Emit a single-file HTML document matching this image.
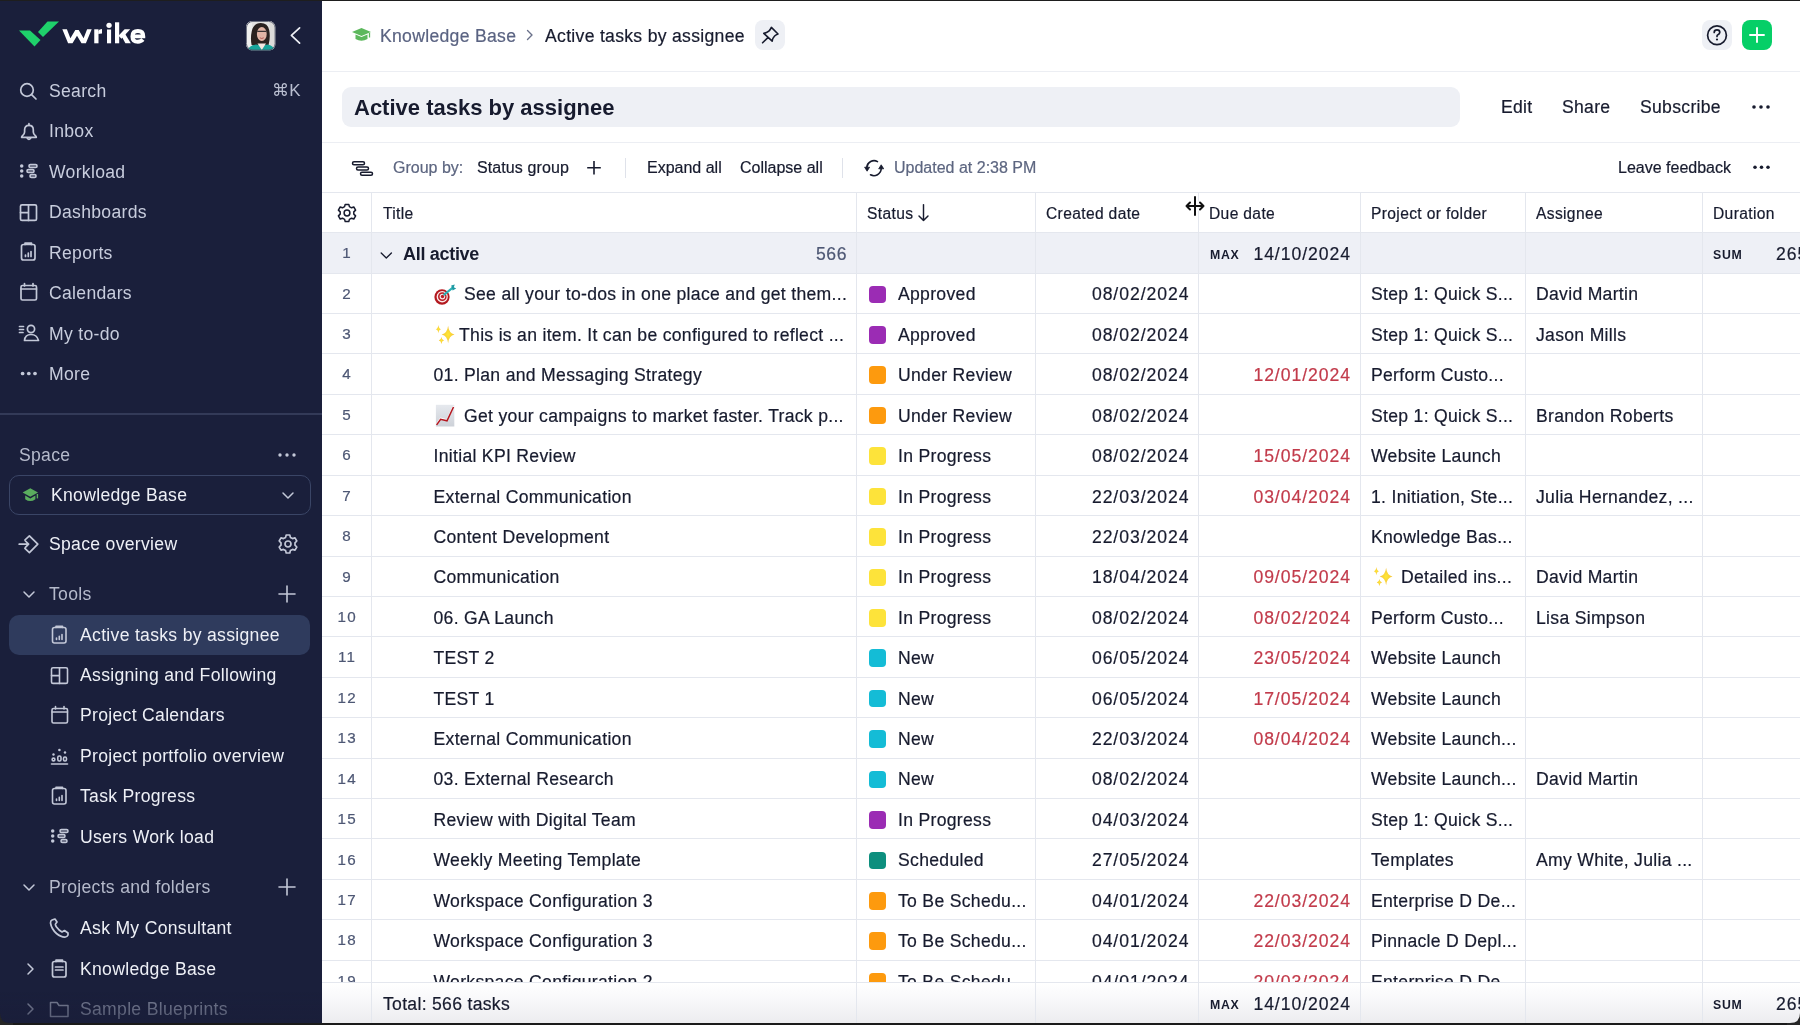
<!DOCTYPE html>
<html><head><meta charset="utf-8"><title>Active tasks by assignee</title>
<style>
html,body{margin:0;padding:0;width:1800px;height:1025px;overflow:hidden;background:#fff}
body{position:relative;font-family:"Liberation Sans", sans-serif}
.t{position:absolute;white-space:nowrap;line-height:40px;height:40px;-webkit-text-stroke:0.2px currentColor}
#root{position:absolute;left:0;top:0;width:1800px;height:1025px;will-change:transform}
svg{overflow:visible}
</style></head><body><div id="root">
<div style="position:absolute;left:0px;top:0px;width:322px;height:1025px;background:#1a1f3b;"></div>
<svg style="position:absolute;left:0px;top:0px;" width="160" height="60" viewBox="0 0 160 60">
<polygon points="19,30.5 30,30.5 40.5,40 34.5,46.5" fill="#1fd16b"/>
<polygon points="38,32 47.5,21.5 59,21.5 43,37" fill="#1fd16b"/>
<g fill="#ffffff">
<polygon points="62.3,29.3 66.9,29.3 70.4,38.2 75.3,30 78.7,30 83.6,38.2 87.1,29.3 91.7,29.3 85.9,43.3 81.5,43.3 77,35.8 72.5,43.3 68.1,43.3"/>
<rect x="94.25" y="29.3" width="4.25" height="14"/>
<path d="M98.3,34 Q99.3,33.4 102,33.4 L102,29.1 Q99.2,29.1 98.3,31 Z"/>
<rect x="107" y="29.5" width="4.1" height="13.8"/>
<circle cx="109.05" cy="25.3" r="2.65"/>
<rect x="115" y="22.3" width="4.2" height="21"/>
<polygon points="118.5,35.8 124.6,29.3 130.2,29.3 121.5,38.8"/>
<polygon points="121.2,35.4 124.4,32.8 130.8,43.3 125.4,43.3"/>
</g>
<path d="M132.4,36.4 L143.3,36.4 Q143.3,31 137.9,31 Q132.4,31 132.4,36.4 Q132.4,41.7 137.9,41.7 Q141.2,41.7 142.9,39.6" fill="none" stroke="#ffffff" stroke-width="3.9"/>
</svg>
<svg style="position:absolute;left:245.5px;top:20.5px;" width="29.5" height="29.5" viewBox="0 0 29.5 29.5">
<defs><clipPath id="av"><rect x="0" y="0" width="29.5" height="29.5" rx="6.5"/></clipPath></defs>
<g clip-path="url(#av)">
<rect width="29.5" height="29.5" fill="#e4e3e2"/>
<rect x="0" y="0" width="6" height="29.5" fill="#efefee"/>
<rect x="23.5" y="0" width="6" height="29.5" fill="#dcdbd9"/>
<path d="M5.6,24 Q4.2,17 5.8,10 Q7.5,2.2 14.8,2 Q21.8,2.2 23.2,9 Q24.6,16 22.6,24 Q19,25 14.5,24.5 Q9,25 5.6,24 Z" fill="#2a2220"/>
<ellipse cx="15.8" cy="13" rx="4.9" ry="7" fill="#e2b5a6"/>
<path d="M11.2,10.3 L20.4,10.3" stroke="#3b3434" stroke-width="1.2"/>
<path d="M13.8,16.8 Q15.8,18.2 17.8,16.8" stroke="#b0524f" stroke-width="0.9" fill="none"/>
<path d="M1.5,29.5 Q3,24.2 10,23.4 L15.8,24.8 L21.5,23.4 Q27.5,24.2 28.5,29.5 Z" fill="#17a59b"/>
<path d="M11.5,22.5 L15.8,29 L20,22.5 Z" fill="#f4e6e0"/>
</g>
<rect x="0.4" y="0.4" width="28.7" height="28.7" rx="6.5" fill="none" stroke="#4f5468" stroke-width="0.9"/>
</svg>
<svg style="position:absolute;left:285px;top:24px;" width="20" height="22" viewBox="0 0 20 22"><path d="M14.6,3.8 L6.4,11.4 L14.6,19.2" fill="none" stroke="#eef0f6" stroke-width="1.7" stroke-linecap="round" stroke-linejoin="round"/></svg>
<div class="t " style="left:49px;top:70.90px;font-size:17.6px;color:#c8cddd;font-weight:400;letter-spacing:0.3px;-webkit-text-stroke:0;">Search</div>
<div class="t " style="left:49px;top:111.30px;font-size:17.6px;color:#c8cddd;font-weight:400;letter-spacing:0.3px;-webkit-text-stroke:0;">Inbox</div>
<div class="t " style="left:49px;top:151.70px;font-size:17.6px;color:#c8cddd;font-weight:400;letter-spacing:0.3px;-webkit-text-stroke:0;">Workload</div>
<div class="t " style="left:49px;top:192.20px;font-size:17.6px;color:#c8cddd;font-weight:400;letter-spacing:0.3px;-webkit-text-stroke:0;">Dashboards</div>
<div class="t " style="left:49px;top:232.60px;font-size:17.6px;color:#c8cddd;font-weight:400;letter-spacing:0.3px;-webkit-text-stroke:0;">Reports</div>
<div class="t " style="left:49px;top:273.00px;font-size:17.6px;color:#c8cddd;font-weight:400;letter-spacing:0.3px;-webkit-text-stroke:0;">Calendars</div>
<div class="t " style="left:49px;top:313.50px;font-size:17.6px;color:#c8cddd;font-weight:400;letter-spacing:0.3px;-webkit-text-stroke:0;">My to-do</div>
<div class="t " style="left:49px;top:353.90px;font-size:17.6px;color:#c8cddd;font-weight:400;letter-spacing:0.3px;-webkit-text-stroke:0;">More</div>
<div class="t " style="left:272px;top:71.00px;font-size:17px;color:#b9bed0;font-weight:400;letter-spacing:0.3px;-webkit-text-stroke:0;">&#8984;K</div>
<svg style="position:absolute;left:16px;top:80px;" width="24" height="24" viewBox="0 0 24 24"><circle cx="11" cy="10" r="6.3" fill="none" stroke="#c3c8d8" stroke-width="1.7" stroke-linecap="round" stroke-linejoin="round"/><path d="M15.6,14.6 L20,19" fill="none" stroke="#c3c8d8" stroke-width="1.7" stroke-linecap="round" stroke-linejoin="round"/></svg>
<svg style="position:absolute;left:16px;top:120.8px;" width="26" height="24" viewBox="0 0 26 24"><path d="M5.6,16.3 Q5.6,15.4 6.6,14.6 Q8.6,13 8.6,11 L8.6,9 Q8.6,4.4 12.95,4.4 Q17.3,4.4 17.3,9 L17.3,11 Q17.3,13 19.3,14.6 Q20.3,15.4 20.3,16.3 Z" fill="none" stroke="#c3c8d8" stroke-width="1.7" stroke-linecap="round" stroke-linejoin="round" stroke-width="1.55"/><path d="M11.2,17 Q12.95,19.8 14.7,17 M12.95,2.7 L12.95,4.3" fill="none" stroke="#c3c8d8" stroke-width="1.7" stroke-linecap="round" stroke-linejoin="round" stroke-width="1.55"/></svg>
<svg style="position:absolute;left:16px;top:160px;" width="24" height="24" viewBox="0 0 24 24"><circle cx="5.7" cy="6" r="1.75" fill="#c3c8d8"/><circle cx="5.7" cy="11" r="1.75" fill="#c3c8d8"/><circle cx="5.7" cy="16" r="1.75" fill="#c3c8d8"/><rect x="13" y="4.6" width="8" height="2.8" rx="1.4" fill="none" stroke="#c3c8d8" stroke-width="1.7" stroke-linecap="round" stroke-linejoin="round" stroke-width="1.4"/><rect x="11" y="9.6" width="7" height="2.8" rx="1.4" fill="none" stroke="#c3c8d8" stroke-width="1.7" stroke-linecap="round" stroke-linejoin="round" stroke-width="1.4"/><rect x="14" y="14.6" width="6" height="2.8" rx="1.4" fill="none" stroke="#c3c8d8" stroke-width="1.7" stroke-linecap="round" stroke-linejoin="round" stroke-width="1.4"/></svg>
<svg style="position:absolute;left:16px;top:200px;" width="24" height="24" viewBox="0 0 24 24"><rect x="4.5" y="4.8" width="16" height="15.6" rx="1.5" fill="none" stroke="#c3c8d8" stroke-width="1.7" stroke-linecap="round" stroke-linejoin="round"/><path d="M12.5,4.8 L12.5,20.4 M4.5,12.6 L12.5,12.6" fill="none" stroke="#c3c8d8" stroke-width="1.7" stroke-linecap="round" stroke-linejoin="round"/></svg>
<svg style="position:absolute;left:16px;top:240px;" width="24" height="24" viewBox="0 0 24 24"><rect x="5.5" y="4.5" width="13.5" height="15.5" rx="2" fill="none" stroke="#c3c8d8" stroke-width="1.7" stroke-linecap="round" stroke-linejoin="round"/><path d="M9,4.5 L9,3.2 L15.5,3.2 L15.5,4.5" fill="none" stroke="#c3c8d8" stroke-width="1.7" stroke-linecap="round" stroke-linejoin="round"/><path d="M9.5,16.5 L9.5,15 M12.3,16.5 L12.3,13.2 M15,16.5 L15,11.5" fill="none" stroke="#c3c8d8" stroke-width="1.7" stroke-linecap="round" stroke-linejoin="round"/></svg>
<svg style="position:absolute;left:16px;top:280px;" width="24" height="24" viewBox="0 0 24 24"><rect x="5" y="5.5" width="15.5" height="14.5" rx="1.5" fill="none" stroke="#c3c8d8" stroke-width="1.7" stroke-linecap="round" stroke-linejoin="round"/><path d="M5,9 L20.5,9 M8.5,3.5 L8.5,6 M17,3.5 L17,6" fill="none" stroke="#c3c8d8" stroke-width="1.7" stroke-linecap="round" stroke-linejoin="round"/></svg>
<svg style="position:absolute;left:16px;top:321px;" width="26" height="24" viewBox="0 0 26 24"><circle cx="15" cy="8" r="3.6" fill="none" stroke="#c3c8d8" stroke-width="1.7" stroke-linecap="round" stroke-linejoin="round"/><path d="M8.5,19.5 Q9,13.5 15,13.5 Q21,13.5 22.5,19.5 Z" fill="none" stroke="#c3c8d8" stroke-width="1.7" stroke-linecap="round" stroke-linejoin="round"/><path d="M3.5,5.5 L7.5,5.5 M3.5,8.5 L7.5,8.5 M3.5,11.5 L7,11.5" fill="none" stroke="#c3c8d8" stroke-width="1.7" stroke-linecap="round" stroke-linejoin="round" stroke-width="1.3"/></svg>
<svg style="position:absolute;left:16px;top:361.5px;" width="24" height="24" viewBox="0 0 24 24"><circle cx="6.6" cy="11.5" r="1.85" fill="#c3c8d8"/><circle cx="12.8" cy="11.5" r="1.85" fill="#c3c8d8"/><circle cx="19" cy="11.5" r="1.85" fill="#c3c8d8"/></svg>
<div style="position:absolute;left:0px;top:413px;width:322px;height:1.5px;background:#333a58;"></div>
<div class="t " style="left:19px;top:435.00px;font-size:17.6px;color:#b5bacb;font-weight:400;letter-spacing:0.3px;-webkit-text-stroke:0;">Space</div>
<svg style="position:absolute;left:274px;top:444px;" width="26" height="22" viewBox="0 0 26 22"><circle cx="6" cy="11" r="1.7" fill="#c3c8d8"/><circle cx="13" cy="11" r="1.7" fill="#c3c8d8"/><circle cx="20" cy="11" r="1.7" fill="#c3c8d8"/></svg>
<div style="position:absolute;left:9px;top:475px;width:299.5px;height:37.5px;border:1.3px solid #3a4566;border-radius:10px;"></div>
<svg style="position:absolute;left:21px;top:485px;" width="20" height="20" viewBox="0 0 20 20"><path d="M1.6,7.6 L9.3,3.2 L17,7.6 L9.3,11.8 Z" fill="#5aad5e"/><path d="M4.2,10.6 L4.2,14.2 Q9.3,18 14.4,14.2 L14.4,10.6 L9.3,13.4 Z" fill="#5aad5e"/><path d="M16.4,9 L16.4,13.4" stroke="#5aad5e" stroke-width="1.4"/></svg>
<div class="t " style="left:51px;top:475.00px;font-size:17.6px;color:#eef0f6;font-weight:400;letter-spacing:0.3px;-webkit-text-stroke:0;">Knowledge Base</div>
<svg style="position:absolute;left:278px;top:485px;" width="20" height="20" viewBox="0 0 20 20"><path d="M5,8 L10,13 L15,8" fill="none" stroke="#c3c8d8" stroke-width="1.5" stroke-linecap="round" stroke-linejoin="round"/></svg>
<svg style="position:absolute;left:17px;top:532px;" width="24" height="24" viewBox="0 0 24 24"><path d="M2.2,12.2 L11.5,12.2 M8.4,9 L11.6,12.2 L8.4,15.4" fill="none" stroke="#c3c8d8" stroke-width="1.7" stroke-linecap="round" stroke-linejoin="round" stroke-width="1.5"/><path d="M7.9,8 L12.4,3.8 L20.8,12.1 L12.4,20.6 L7.9,16.3" fill="none" stroke="#c3c8d8" stroke-width="1.7" stroke-linecap="round" stroke-linejoin="round" stroke-width="1.5"/></svg>
<div class="t " style="left:49px;top:524.00px;font-size:17.6px;color:#eef0f6;font-weight:400;letter-spacing:0.3px;-webkit-text-stroke:0;">Space overview</div>
<svg style="position:absolute;left:276px;top:532px;" width="24" height="24" viewBox="0 0 24 24"><g transform="translate(12,12)"><path d="M-1.8,-9 L1.8,-9 L2.4,-6.6 L4.6,-5.4 L7,-6.2 L8.8,-3 L7,-1.2 L7,1.2 L8.8,3 L7,6.2 L4.6,5.4 L2.4,6.6 L1.8,9 L-1.8,9 L-2.4,6.6 L-4.6,5.4 L-7,6.2 L-8.8,3 L-7,1.2 L-7,-1.2 L-8.8,-3 L-7,-6.2 L-4.6,-5.4 L-2.4,-6.6 Z" fill="none" stroke="#c3c8d8" stroke-width="1.7" stroke-linecap="round" stroke-linejoin="round" stroke-width="1.5"/><circle r="3" fill="none" stroke="#c3c8d8" stroke-width="1.7" stroke-linecap="round" stroke-linejoin="round" stroke-width="1.5"/></g></svg>
<svg style="position:absolute;left:19px;top:584px;" width="20" height="20" viewBox="0 0 20 20"><path d="M5,8 L10,13 L15,8" fill="none" stroke="#c3c8d8" stroke-width="1.5" stroke-linecap="round" stroke-linejoin="round"/></svg>
<div class="t " style="left:49px;top:574.00px;font-size:17.6px;color:#b5bacb;font-weight:400;letter-spacing:0.3px;-webkit-text-stroke:0;">Tools</div>
<svg style="position:absolute;left:276px;top:583px;" width="22" height="22" viewBox="0 0 22 22"><path d="M11,3 L11,19 M3,11 L19,11" fill="none" stroke="#c3c8d8" stroke-width="1.6" stroke-linecap="round"/></svg>
<div style="position:absolute;left:9px;top:614.5px;width:301px;height:40.5px;background:#2f3b5d;border-radius:10px"></div>
<svg style="position:absolute;left:47px;top:623px;" width="24" height="24" viewBox="0 0 24 24"><rect x="5.5" y="4.5" width="13.5" height="15.5" rx="2" fill="none" stroke="#c3c8d8" stroke-width="1.6" stroke-linecap="round" stroke-linejoin="round"/><path d="M9,4.5 L9,3.2 L15.5,3.2 L15.5,4.5" fill="none" stroke="#c3c8d8" stroke-width="1.6" stroke-linecap="round" stroke-linejoin="round"/><path d="M9.5,16.5 L9.5,15 M12.3,16.5 L12.3,13.2 M15,16.5 L15,11.5" fill="none" stroke="#c3c8d8" stroke-width="1.6" stroke-linecap="round" stroke-linejoin="round"/></svg>
<div class="t " style="left:80px;top:615.00px;font-size:17.6px;color:#eef0f6;font-weight:400;letter-spacing:0.3px;-webkit-text-stroke:0;">Active tasks by assignee</div>
<svg style="position:absolute;left:47px;top:663px;" width="24" height="24" viewBox="0 0 24 24"><rect x="4.5" y="4.8" width="16" height="15.6" rx="1.5" fill="none" stroke="#c3c8d8" stroke-width="1.6" stroke-linecap="round" stroke-linejoin="round"/><path d="M12.5,4.8 L12.5,20.4 M4.5,12.6 L12.5,12.6" fill="none" stroke="#c3c8d8" stroke-width="1.6" stroke-linecap="round" stroke-linejoin="round"/></svg>
<div class="t " style="left:80px;top:655.00px;font-size:17.6px;color:#eef0f6;font-weight:400;letter-spacing:0.3px;-webkit-text-stroke:0;">Assigning and Following</div>
<svg style="position:absolute;left:47px;top:703px;" width="24" height="24" viewBox="0 0 24 24"><rect x="5" y="5.5" width="15.5" height="14.5" rx="1.5" fill="none" stroke="#c3c8d8" stroke-width="1.6" stroke-linecap="round" stroke-linejoin="round"/><path d="M5,9 L20.5,9 M8.5,3.5 L8.5,6 M17,3.5 L17,6" fill="none" stroke="#c3c8d8" stroke-width="1.6" stroke-linecap="round" stroke-linejoin="round"/></svg>
<div class="t " style="left:80px;top:695.00px;font-size:17.6px;color:#eef0f6;font-weight:400;letter-spacing:0.3px;-webkit-text-stroke:0;">Project Calendars</div>
<svg style="position:absolute;left:47px;top:744px;" width="24" height="24" viewBox="0 0 24 24"><path d="M4.5,20 L20.5,20" fill="none" stroke="#c3c8d8" stroke-width="1.6" stroke-linecap="round" stroke-linejoin="round"/><circle cx="6.5" cy="15.5" r="1.4" fill="none" stroke="#c3c8d8" stroke-width="1.6" stroke-linecap="round" stroke-linejoin="round" stroke-width="1.3"/><rect x="10.8" y="12" width="3.2" height="5" rx="1.4" fill="none" stroke="#c3c8d8" stroke-width="1.6" stroke-linecap="round" stroke-linejoin="round" stroke-width="1.3"/><rect x="16.5" y="13" width="3" height="4" rx="1.4" fill="none" stroke="#c3c8d8" stroke-width="1.6" stroke-linecap="round" stroke-linejoin="round" stroke-width="1.3"/><circle cx="12.4" cy="6" r="1.3" fill="#c3c8d8"/><circle cx="6.5" cy="10.5" r="1.2" fill="#c3c8d8"/><circle cx="18" cy="8.5" r="1.2" fill="#c3c8d8"/></svg>
<div class="t " style="left:80px;top:736.00px;font-size:17.6px;color:#eef0f6;font-weight:400;letter-spacing:0.3px;-webkit-text-stroke:0;">Project portfolio overview</div>
<svg style="position:absolute;left:47px;top:784px;" width="24" height="24" viewBox="0 0 24 24"><rect x="5.5" y="4.5" width="13.5" height="15.5" rx="2" fill="none" stroke="#c3c8d8" stroke-width="1.6" stroke-linecap="round" stroke-linejoin="round"/><path d="M9,4.5 L9,3.2 L15.5,3.2 L15.5,4.5" fill="none" stroke="#c3c8d8" stroke-width="1.6" stroke-linecap="round" stroke-linejoin="round"/><path d="M9.5,16.5 L9.5,15 M12.3,16.5 L12.3,13.2 M15,16.5 L15,11.5" fill="none" stroke="#c3c8d8" stroke-width="1.6" stroke-linecap="round" stroke-linejoin="round"/></svg>
<div class="t " style="left:80px;top:776.00px;font-size:17.6px;color:#eef0f6;font-weight:400;letter-spacing:0.3px;-webkit-text-stroke:0;">Task Progress</div>
<svg style="position:absolute;left:47px;top:825px;" width="24" height="24" viewBox="0 0 24 24"><circle cx="5.7" cy="6" r="1.75" fill="#c3c8d8"/><circle cx="5.7" cy="11" r="1.75" fill="#c3c8d8"/><circle cx="5.7" cy="16" r="1.75" fill="#c3c8d8"/><rect x="13" y="4.6" width="8" height="2.8" rx="1.4" fill="none" stroke="#c3c8d8" stroke-width="1.6" stroke-linecap="round" stroke-linejoin="round" stroke-width="1.4"/><rect x="11" y="9.6" width="7" height="2.8" rx="1.4" fill="none" stroke="#c3c8d8" stroke-width="1.6" stroke-linecap="round" stroke-linejoin="round" stroke-width="1.4"/><rect x="14" y="14.6" width="6" height="2.8" rx="1.4" fill="none" stroke="#c3c8d8" stroke-width="1.6" stroke-linecap="round" stroke-linejoin="round" stroke-width="1.4"/></svg>
<div class="t " style="left:80px;top:817.00px;font-size:17.6px;color:#eef0f6;font-weight:400;letter-spacing:0.3px;-webkit-text-stroke:0;">Users Work load</div>
<svg style="position:absolute;left:19px;top:877px;" width="20" height="20" viewBox="0 0 20 20"><path d="M5,8 L10,13 L15,8" fill="none" stroke="#c3c8d8" stroke-width="1.5" stroke-linecap="round" stroke-linejoin="round"/></svg>
<div class="t " style="left:49px;top:867.00px;font-size:17.6px;color:#b5bacb;font-weight:400;letter-spacing:0.3px;-webkit-text-stroke:0;">Projects and folders</div>
<svg style="position:absolute;left:276px;top:876px;" width="22" height="22" viewBox="0 0 22 22"><path d="M11,3 L11,19 M3,11 L19,11" fill="none" stroke="#c3c8d8" stroke-width="1.6" stroke-linecap="round"/></svg>
<svg style="position:absolute;left:47px;top:916px;" width="24" height="24" viewBox="0 0 24 24"><path d="M5,4 Q3.5,4.5 3.5,7 Q4.5,13 9.5,17.5 Q14.5,21.5 18.5,21 Q20.5,20.5 21,19 L21,17 L17.5,14.5 L15,16 Q12,14.5 9.5,11 Q8,8.5 8.5,8 L10,6 L8,3 Z" fill="none" stroke="#c3c8d8" stroke-width="1.7" stroke-linecap="round" stroke-linejoin="round" stroke-width="1.5"/></svg>
<div class="t " style="left:80px;top:908.00px;font-size:17.6px;color:#eef0f6;font-weight:400;letter-spacing:0.3px;-webkit-text-stroke:0;">Ask My Consultant</div>
<svg style="position:absolute;left:20px;top:958.5px;" width="20" height="20" viewBox="0 0 20 20"><path d="M8,5 L13,10 L8,15" fill="none" stroke="#c3c8d8" stroke-width="1.5" stroke-linecap="round" stroke-linejoin="round"/></svg>
<svg style="position:absolute;left:47px;top:956.5px;" width="24" height="24" viewBox="0 0 24 24"><rect x="5.5" y="4.5" width="13.5" height="15.5" rx="2" fill="none" stroke="#c3c8d8" stroke-width="1.7" stroke-linecap="round" stroke-linejoin="round"/><path d="M9,4.5 L9,3.2 L15.5,3.2 L15.5,4.5 M8.5,10 L16,10 M8.5,13 L16,13" fill="none" stroke="#c3c8d8" stroke-width="1.7" stroke-linecap="round" stroke-linejoin="round"/></svg>
<div class="t " style="left:80px;top:949.00px;font-size:17.6px;color:#eef0f6;font-weight:400;letter-spacing:0.3px;-webkit-text-stroke:0;">Knowledge Base</div>
<svg style="position:absolute;left:20px;top:999px;" width="20" height="20" viewBox="0 0 20 20"><path d="M8,5 L13,10 L8,15" fill="none" stroke="#7b8196" stroke-width="1.5" stroke-linecap="round" stroke-linejoin="round"/></svg>
<svg style="position:absolute;left:47px;top:997px;" width="24" height="24" viewBox="0 0 24 24"><path d="M3.5,7 L3.5,19.5 L21,19.5 L21,8.5 L12,8.5 L10,5.5 L3.5,5.5 Z" fill="none" stroke="#7b8196" stroke-width="1.5" stroke-linejoin="round"/></svg>
<div class="t " style="left:80px;top:989.00px;font-size:17.6px;color:#777d93;font-weight:400;letter-spacing:0.3px;-webkit-text-stroke:0;">Sample Blueprints</div>
<div style="position:absolute;left:0;top:992px;width:322px;height:33px;background:linear-gradient(rgba(26,30,57,0),rgba(26,30,57,0.45))"></div>
<div style="position:absolute;left:322px;top:0px;width:1478px;height:1025px;background:#ffffff;"></div>
<svg style="position:absolute;left:350px;top:24px;" width="24" height="22" viewBox="0 0 24 22"><path d="M2,8 L11.5,4 L21,8 L11.5,12 Z" fill="#5cb85c"/><path d="M5.5,10.5 L5.5,15 Q11.5,18.5 17.5,15 L17.5,10.5 L11.5,13 Z" fill="#5cb85c"/><path d="M19.5,9 L19.5,13.5" stroke="#5cb85c" stroke-width="1.3"/></svg>
<div class="t " style="left:380px;top:15.60px;font-size:17.6px;color:#5a6382;font-weight:400;letter-spacing:0.3px;">Knowledge Base</div>
<svg style="position:absolute;left:522px;top:25px;" width="16" height="20" viewBox="0 0 16 20"><path d="M5.5,5.5 L10,10 L5.5,14.5" fill="none" stroke="#6a718a" stroke-width="1.4" stroke-linecap="round" stroke-linejoin="round"/></svg>
<div class="t " style="left:545px;top:15.60px;font-size:17.6px;color:#171b2e;font-weight:400;letter-spacing:0.3px;">Active tasks by assignee</div>
<div style="position:absolute;left:755px;top:20px;width:30px;height:30px;background:#eef0f5;border-radius:8px"></div>
<svg style="position:absolute;left:755px;top:20px;" width="30" height="30" viewBox="0 0 30 30"><path d="M16.4,7.4 L23,14 Q21,14.6 19.6,16 Q17.6,18 17.2,21.2 L8.8,13.4 Q11.8,13 13.8,11.2 Q15.6,9.4 16.4,7.4 Z M12.9,17.6 L7.6,22.8" fill="none" stroke="#171b2e" stroke-width="1.6" stroke-linejoin="round" stroke-linecap="round"/></svg>
<div style="position:absolute;left:1702px;top:20px;width:30px;height:30px;background:#eef0f5;border-radius:8px"></div>
<svg style="position:absolute;left:1705px;top:23px;" width="24" height="24" viewBox="0 0 24 24"><circle cx="12" cy="12.2" r="9.4" fill="none" stroke="#171b2e" stroke-width="1.7"/><path d="M9.2,9.5 Q9.2,6.8 12,6.8 Q14.8,6.8 14.8,9.3 Q14.8,11 12.6,12 Q12,12.3 12,13.5" fill="none" stroke="#171b2e" stroke-width="1.7" stroke-linecap="round"/><circle cx="12" cy="16.5" r="1.1" fill="#171b2e"/></svg>
<div style="position:absolute;left:1742px;top:20px;width:30px;height:30px;background:#06cf67;border-radius:8px"></div>
<svg style="position:absolute;left:1745px;top:23px;" width="24" height="24" viewBox="0 0 24 24"><path d="M12,5 L12,19 M5,12 L19,12" stroke="#fff" stroke-width="1.9" stroke-linecap="round"/></svg>
<div style="position:absolute;left:322px;top:70.5px;width:1478px;height:1.2px;background:#eceef3;"></div>
<div style="position:absolute;left:342px;top:87px;width:1118px;height:39.5px;background:#eef0f5;border-radius:9px"></div>
<div class="t " style="left:354px;top:87.50px;font-size:22px;color:#171b2e;font-weight:700;letter-spacing:0px;-webkit-text-stroke:0;">Active tasks by assignee</div>
<div class="t " style="left:1501px;top:87.00px;font-size:17.6px;color:#171b2e;font-weight:400;letter-spacing:0.3px;">Edit</div>
<div class="t " style="left:1562px;top:87.00px;font-size:17.6px;color:#171b2e;font-weight:400;letter-spacing:0.3px;">Share</div>
<div class="t " style="left:1640px;top:87.00px;font-size:17.6px;color:#171b2e;font-weight:400;letter-spacing:0.3px;">Subscribe</div>
<svg style="position:absolute;left:1750px;top:96px;" width="24" height="22" viewBox="0 0 24 22"><circle cx="4" cy="11" r="1.8" fill="#171b2e"/><circle cx="11" cy="11" r="1.8" fill="#171b2e"/><circle cx="18" cy="11" r="1.8" fill="#171b2e"/></svg>
<div style="position:absolute;left:322px;top:141.5px;width:1478px;height:1.2px;background:#eceef3;"></div>
<svg style="position:absolute;left:340px;top:150px;" width="40" height="30" viewBox="0 0 40 30"><rect x="12.5" y="11.8" width="12" height="3" rx="1.5" fill="none" stroke="#171b2e" stroke-width="1.5"/><rect x="16.5" y="17" width="12" height="3" rx="1.5" fill="none" stroke="#171b2e" stroke-width="1.5"/><rect x="20.5" y="22.2" width="12" height="3" rx="1.5" fill="none" stroke="#171b2e" stroke-width="1.5"/></svg>
<div class="t " style="left:393px;top:147.50px;font-size:16px;color:#5d6680;font-weight:400;letter-spacing:0px;">Group by:</div>
<div class="t " style="left:477px;top:147.50px;font-size:16px;color:#171b2e;font-weight:400;letter-spacing:0.1px;">Status group</div>
<svg style="position:absolute;left:583px;top:156.5px;" width="22" height="22" viewBox="0 0 22 22"><path d="M11,4 L11,17.5 M4.2,10.75 L17.8,10.75" stroke="#171b2e" stroke-width="1.6" stroke-linecap="butt"/></svg>
<div style="position:absolute;left:625px;top:158px;width:1px;height:19.5px;background:#dfe2ea;"></div>
<div class="t " style="left:647px;top:147.50px;font-size:16px;color:#171b2e;font-weight:400;letter-spacing:0px;">Expand all</div>
<div class="t " style="left:740px;top:147.50px;font-size:16px;color:#171b2e;font-weight:400;letter-spacing:0px;">Collapse all</div>
<div style="position:absolute;left:842px;top:158px;width:1px;height:19.5px;background:#dfe2ea;"></div>
<svg style="position:absolute;left:861.5px;top:155.5px;" width="24" height="24" viewBox="0 0 24 24"><path d="M15.5,5.6 A7.3,7.3 0 0 0 4.8,11.2" fill="none" stroke="#171b2e" stroke-width="1.6" stroke-linecap="round"/><path d="M2.6,11.2 L7.6,11.2 L5.1,15.2 Z" fill="#171b2e" stroke="#171b2e" stroke-width="0.8" stroke-linejoin="round"/><path d="M8.5,18.8 A7.3,7.3 0 0 0 19.2,12.8" fill="none" stroke="#171b2e" stroke-width="1.6" stroke-linecap="round"/><path d="M16.7,12.8 L21.7,12.8 L19.2,8.8 Z" fill="#171b2e" stroke="#171b2e" stroke-width="0.8" stroke-linejoin="round"/></svg>
<div class="t " style="left:894px;top:147.50px;font-size:16px;color:#5d6680;font-weight:400;letter-spacing:0px;">Updated at 2:38 PM</div>
<div class="t" style="right:69.00px;top:147.50px;font-size:16px;color:#171b2e;font-weight:400;letter-spacing:0px;text-align:right;">Leave feedback</div>
<svg style="position:absolute;left:1750px;top:156px;" width="24" height="22" viewBox="0 0 24 22"><circle cx="5" cy="11.2" r="1.75" fill="#171b2e"/><circle cx="11.5" cy="11.2" r="1.75" fill="#171b2e"/><circle cx="18" cy="11.2" r="1.75" fill="#171b2e"/></svg>
<div style="position:absolute;left:322px;top:192px;width:1478px;height:1px;background:#e4e7ee;"></div>
<div style="position:absolute;left:322px;top:232.2px;width:1478px;height:40.42px;background:#eef0f6;"></div>
<div style="position:absolute;left:0;top:0;width:1800px;height:982.5px;overflow:hidden">
<div style="position:absolute;left:322px;top:232px;width:1478px;height:1px;background:#e4e7ee;"></div>
<div style="position:absolute;left:322px;top:273px;width:1478px;height:1px;background:#e4e7ee;"></div>
<div style="position:absolute;left:322px;top:313px;width:1478px;height:1px;background:#e4e7ee;"></div>
<div style="position:absolute;left:322px;top:353px;width:1478px;height:1px;background:#e4e7ee;"></div>
<div style="position:absolute;left:322px;top:394px;width:1478px;height:1px;background:#e4e7ee;"></div>
<div style="position:absolute;left:322px;top:434px;width:1478px;height:1px;background:#e4e7ee;"></div>
<div style="position:absolute;left:322px;top:475px;width:1478px;height:1px;background:#e4e7ee;"></div>
<div style="position:absolute;left:322px;top:515px;width:1478px;height:1px;background:#e4e7ee;"></div>
<div style="position:absolute;left:322px;top:556px;width:1478px;height:1px;background:#e4e7ee;"></div>
<div style="position:absolute;left:322px;top:596px;width:1478px;height:1px;background:#e4e7ee;"></div>
<div style="position:absolute;left:322px;top:636px;width:1478px;height:1px;background:#e4e7ee;"></div>
<div style="position:absolute;left:322px;top:677px;width:1478px;height:1px;background:#e4e7ee;"></div>
<div style="position:absolute;left:322px;top:717px;width:1478px;height:1px;background:#e4e7ee;"></div>
<div style="position:absolute;left:322px;top:758px;width:1478px;height:1px;background:#e4e7ee;"></div>
<div style="position:absolute;left:322px;top:798px;width:1478px;height:1px;background:#e4e7ee;"></div>
<div style="position:absolute;left:322px;top:838px;width:1478px;height:1px;background:#e4e7ee;"></div>
<div style="position:absolute;left:322px;top:879px;width:1478px;height:1px;background:#e4e7ee;"></div>
<div style="position:absolute;left:322px;top:919px;width:1478px;height:1px;background:#e4e7ee;"></div>
<div style="position:absolute;left:322px;top:960px;width:1478px;height:1px;background:#e4e7ee;"></div>
<div style="position:absolute;left:322px;top:1000px;width:1478px;height:1px;background:#e4e7ee;"></div>
<div style="position:absolute;left:371px;top:192px;width:1px;height:790px;background:#e4e7ee;"></div>
<div style="position:absolute;left:856px;top:192px;width:1px;height:790px;background:#e4e7ee;"></div>
<div style="position:absolute;left:1035px;top:192px;width:1px;height:790px;background:#e4e7ee;"></div>
<div style="position:absolute;left:1198px;top:192px;width:1px;height:790px;background:#e4e7ee;"></div>
<div style="position:absolute;left:1360px;top:192px;width:1px;height:790px;background:#e4e7ee;"></div>
<div style="position:absolute;left:1525px;top:192px;width:1px;height:790px;background:#e4e7ee;"></div>
<div style="position:absolute;left:1702px;top:192px;width:1px;height:790px;background:#e4e7ee;"></div>
<svg style="position:absolute;left:335px;top:201px;" width="24" height="24" viewBox="0 0 24 24"><g transform="translate(12,12)"><path d="M-1.8,-8.6 L1.8,-8.6 L2.4,-6.4 L4.5,-5.2 L6.8,-6 L8.6,-2.9 L6.8,-1.1 L6.8,1.1 L8.6,2.9 L6.8,6 L4.5,5.2 L2.4,6.4 L1.8,8.6 L-1.8,8.6 L-2.4,6.4 L-4.5,5.2 L-6.8,6 L-8.6,2.9 L-6.8,1.1 L-6.8,-1.1 L-8.6,-2.9 L-6.8,-6 L-4.5,-5.2 L-2.4,-6.4 Z" fill="none" stroke="#171b2e" stroke-width="1.5" stroke-linejoin="round"/><circle r="2.9" fill="none" stroke="#171b2e" stroke-width="1.5"/></g></svg>
<div class="t " style="left:383px;top:194.00px;font-size:15.6px;color:#171b2e;font-weight:400;letter-spacing:0.35px;">Title</div>
<div class="t " style="left:867px;top:194.00px;font-size:15.6px;color:#171b2e;font-weight:400;letter-spacing:0.35px;">Status</div>
<svg style="position:absolute;left:914px;top:202px;" width="18" height="22" viewBox="0 0 18 22"><path d="M9.5,2.6 L9.5,18.6 M5,14.1 L9.5,18.6 L14,14.1" fill="none" stroke="#171b2e" stroke-width="1.45" stroke-linecap="round" stroke-linejoin="round"/></svg>
<div class="t " style="left:1046px;top:194.00px;font-size:15.6px;color:#171b2e;font-weight:400;letter-spacing:0.35px;">Created date</div>
<div class="t " style="left:1209px;top:194.00px;font-size:15.6px;color:#171b2e;font-weight:400;letter-spacing:0.35px;">Due date</div>
<div class="t " style="left:1371px;top:194.00px;font-size:15.6px;color:#171b2e;font-weight:400;letter-spacing:0.35px;">Project or folder</div>
<div class="t " style="left:1536px;top:194.00px;font-size:15.6px;color:#171b2e;font-weight:400;letter-spacing:0.35px;">Assignee</div>
<div class="t " style="left:1713px;top:194.00px;font-size:15.6px;color:#171b2e;font-weight:400;letter-spacing:0.35px;">Duration</div>
<svg style="position:absolute;left:1183px;top:194px;" width="24" height="24" viewBox="0 0 24 24"><path d="M12,3 L12,21 M3.5,12 L20.5,12 M7,8.5 L3.5,12 L7,15.5 M17,8.5 L20.5,12 L17,15.5" fill="none" stroke="#fff" stroke-width="4" stroke-linecap="round" stroke-linejoin="round"/><path d="M12,3 L12,21 M3.5,12 L20.5,12 M7,8.5 L3.5,12 L7,15.5 M17,8.5 L20.5,12 L17,15.5" fill="none" stroke="#111" stroke-width="2" stroke-linecap="round" stroke-linejoin="round"/></svg>
<div class="t" style="left:326px;width:41px;text-align:center;top:233.21px;font-size:15.2px;color:#4d5774">1</div>
<svg style="position:absolute;left:376px;top:245.01px;" width="20" height="20" viewBox="0 0 20 20"><path d="M5.2,8 L10.3,13.1 L15.4,8" fill="none" stroke="#171b2e" stroke-width="1.35" stroke-linecap="round" stroke-linejoin="round"/></svg>
<div class="t " style="left:403px;top:234.01px;font-size:18px;color:#171b2e;font-weight:700;letter-spacing:-0.3px;-webkit-text-stroke:0;">All active</div>
<div class="t" style="right:952.90px;top:234.01px;font-size:17.6px;color:#4d5774;font-weight:400;letter-spacing:0.6px;text-align:right;">566</div>
<div class="t " style="left:1210px;top:234.81px;font-size:12.3px;color:#171b2e;font-weight:700;letter-spacing:0.7px;-webkit-text-stroke:0;">MAX</div>
<div class="t" style="right:449.05px;top:234.01px;font-size:17.6px;color:#171b2e;font-weight:400;letter-spacing:0.95px;text-align:right;">14/10/2024</div>
<div class="t " style="left:1713px;top:234.81px;font-size:12.3px;color:#171b2e;font-weight:700;letter-spacing:0.7px;-webkit-text-stroke:0;">SUM</div>
<div class="t " style="left:1776px;top:234.01px;font-size:17.6px;color:#171b2e;font-weight:400;letter-spacing:0.95px;">265</div>
<div class="t" style="left:326px;width:41px;text-align:center;top:273.63px;font-size:15.2px;color:#4d5774;letter-spacing:1.3px;text-indent:1.3px">2</div>
<svg style="position:absolute;left:433px;top:282.43px" width="24" height="24" viewBox="0 0 24 24"><ellipse cx="9" cy="15" rx="7.6" ry="7.7" fill="#b3191f"/><ellipse cx="9.2" cy="14.8" rx="5.6" ry="5.7" fill="#fbe9e9"/><ellipse cx="9.3" cy="14.7" rx="4.3" ry="4.4" fill="#b81d24"/><ellipse cx="9.4" cy="14.6" rx="2.8" ry="2.9" fill="#fbe9e9"/><ellipse cx="9.5" cy="14.5" rx="1.7" ry="1.8" fill="#b81d24"/><path d="M11.2,12.6 L19.8,5.6" stroke="#2bb0b6" stroke-width="2" stroke-linecap="round"/><path d="M18.2,3.6 L21.8,2.6 L20.8,5.2 L23.2,6.6 L19.6,8.4 Z" fill="#1f9aa3"/></svg>
<div class="t " style="left:464px;top:274.43px;font-size:17.6px;color:#171b2e;font-weight:400;letter-spacing:0.3px;">See all your to-dos in one place and get them...</div>
<div style="position:absolute;left:868.5px;top:285.63px;width:17.6px;height:17.6px;border-radius:4px;background:#9b2cb4"></div>
<div class="t " style="left:898px;top:274.43px;font-size:17.6px;color:#171b2e;font-weight:400;letter-spacing:0.3px;">Approved</div>
<div class="t" style="right:610.55px;top:274.43px;font-size:17.6px;color:#171b2e;font-weight:400;letter-spacing:0.95px;text-align:right;">08/02/2024</div>
<div class="t " style="left:1371px;top:274.43px;font-size:17.6px;color:#171b2e;font-weight:400;letter-spacing:0.3px;">Step 1: Quick S...</div>
<div class="t " style="left:1536px;top:274.43px;font-size:17.6px;color:#171b2e;font-weight:400;letter-spacing:0.3px;">David Martin</div>
<div class="t" style="left:326px;width:41px;text-align:center;top:314.05px;font-size:15.2px;color:#4d5774;letter-spacing:1.3px;text-indent:1.3px">3</div>
<svg style="position:absolute;left:433px;top:322.85px" width="24" height="24" viewBox="0 0 24 24"><defs><radialGradient id="sg" cx="0.5" cy="0.5" r="0.6"><stop offset="0" stop-color="#ffe835"/><stop offset="1" stop-color="#f2b93b"/></radialGradient></defs><path d="M15.1,2.8000000000000007 Q15.932,10.369 21.5,11.5 Q15.932,12.631 15.1,20.2 Q14.267999999999999,12.631 8.7,11.5 Q14.267999999999999,10.369 15.1,2.8000000000000007 Z" fill="url(#sg)"/><path d="M5.4,2.1000000000000005 Q5.738,5.667 8.0,6.2 Q5.738,6.7330000000000005 5.4,10.3 Q5.062,6.7330000000000005 2.8000000000000003,6.2 Q5.062,5.667 5.4,2.1000000000000005 Z" fill="url(#sg)"/><path d="M8.4,13.899999999999999 Q8.738,16.945 11.0,17.4 Q8.738,17.854999999999997 8.4,20.9 Q8.062000000000001,17.854999999999997 5.800000000000001,17.4 Q8.062000000000001,16.945 8.4,13.899999999999999 Z" fill="url(#sg)"/></svg>
<div class="t " style="left:459px;top:314.85px;font-size:17.6px;color:#171b2e;font-weight:400;letter-spacing:0.3px;">This is an item. It can be configured to reflect ...</div>
<div style="position:absolute;left:868.5px;top:326.05px;width:17.6px;height:17.6px;border-radius:4px;background:#9b2cb4"></div>
<div class="t " style="left:898px;top:314.85px;font-size:17.6px;color:#171b2e;font-weight:400;letter-spacing:0.3px;">Approved</div>
<div class="t" style="right:610.55px;top:314.85px;font-size:17.6px;color:#171b2e;font-weight:400;letter-spacing:0.95px;text-align:right;">08/02/2024</div>
<div class="t " style="left:1371px;top:314.85px;font-size:17.6px;color:#171b2e;font-weight:400;letter-spacing:0.3px;">Step 1: Quick S...</div>
<div class="t " style="left:1536px;top:314.85px;font-size:17.6px;color:#171b2e;font-weight:400;letter-spacing:0.3px;">Jason Mills</div>
<div class="t" style="left:326px;width:41px;text-align:center;top:354.47px;font-size:15.2px;color:#4d5774;letter-spacing:1.3px;text-indent:1.3px">4</div>
<div class="t " style="left:433.5px;top:355.27px;font-size:17.6px;color:#171b2e;font-weight:400;letter-spacing:0.3px;">01. Plan and Messaging Strategy</div>
<div style="position:absolute;left:868.5px;top:366.47px;width:17.6px;height:17.6px;border-radius:4px;background:#fd9a0e"></div>
<div class="t " style="left:898px;top:355.27px;font-size:17.6px;color:#171b2e;font-weight:400;letter-spacing:0.3px;">Under Review</div>
<div class="t" style="right:610.55px;top:355.27px;font-size:17.6px;color:#171b2e;font-weight:400;letter-spacing:0.95px;text-align:right;">08/02/2024</div>
<div class="t" style="right:449.05px;top:355.27px;font-size:17.6px;color:#c23b4b;font-weight:400;letter-spacing:0.95px;text-align:right;">12/01/2024</div>
<div class="t " style="left:1371px;top:355.27px;font-size:17.6px;color:#171b2e;font-weight:400;letter-spacing:0.3px;">Perform Custo...</div>
<div class="t" style="left:326px;width:41px;text-align:center;top:394.89px;font-size:15.2px;color:#4d5774;letter-spacing:1.3px;text-indent:1.3px">5</div>
<svg style="position:absolute;left:433px;top:403.69px" width="24" height="24" viewBox="0 0 24 24"><defs><linearGradient id="cg" x1="0" y1="0" x2="0" y2="1"><stop offset="0" stop-color="#e6e9ee"/><stop offset="1" stop-color="#cdd1d8"/></linearGradient></defs><rect x="2.9" y="0.8" width="18.4" height="21.7" fill="url(#cg)"/><path d="M3.6,19.9 L7.6,14.3 L14,15.8 L20.5,2" fill="none" stroke="#ffffff" stroke-width="1.2" stroke-linejoin="miter"/><path d="M3.6,20.9 L7.6,15.3 L14,16.8 L20.5,3" fill="none" stroke="#b5161e" stroke-width="1.5" stroke-linejoin="miter"/></svg>
<div class="t " style="left:464px;top:395.69px;font-size:17.6px;color:#171b2e;font-weight:400;letter-spacing:0.3px;">Get your campaigns to market faster. Track p...</div>
<div style="position:absolute;left:868.5px;top:406.89px;width:17.6px;height:17.6px;border-radius:4px;background:#fd9a0e"></div>
<div class="t " style="left:898px;top:395.69px;font-size:17.6px;color:#171b2e;font-weight:400;letter-spacing:0.3px;">Under Review</div>
<div class="t" style="right:610.55px;top:395.69px;font-size:17.6px;color:#171b2e;font-weight:400;letter-spacing:0.95px;text-align:right;">08/02/2024</div>
<div class="t " style="left:1371px;top:395.69px;font-size:17.6px;color:#171b2e;font-weight:400;letter-spacing:0.3px;">Step 1: Quick S...</div>
<div class="t " style="left:1536px;top:395.69px;font-size:17.6px;color:#171b2e;font-weight:400;letter-spacing:0.3px;">Brandon Roberts</div>
<div class="t" style="left:326px;width:41px;text-align:center;top:435.31px;font-size:15.2px;color:#4d5774;letter-spacing:1.3px;text-indent:1.3px">6</div>
<div class="t " style="left:433.5px;top:436.11px;font-size:17.6px;color:#171b2e;font-weight:400;letter-spacing:0.3px;">Initial KPI Review</div>
<div style="position:absolute;left:868.5px;top:447.31px;width:17.6px;height:17.6px;border-radius:4px;background:#fde33a"></div>
<div class="t " style="left:898px;top:436.11px;font-size:17.6px;color:#171b2e;font-weight:400;letter-spacing:0.3px;">In Progress</div>
<div class="t" style="right:610.55px;top:436.11px;font-size:17.6px;color:#171b2e;font-weight:400;letter-spacing:0.95px;text-align:right;">08/02/2024</div>
<div class="t" style="right:449.05px;top:436.11px;font-size:17.6px;color:#c23b4b;font-weight:400;letter-spacing:0.95px;text-align:right;">15/05/2024</div>
<div class="t " style="left:1371px;top:436.11px;font-size:17.6px;color:#171b2e;font-weight:400;letter-spacing:0.3px;">Website Launch</div>
<div class="t" style="left:326px;width:41px;text-align:center;top:475.73px;font-size:15.2px;color:#4d5774;letter-spacing:1.3px;text-indent:1.3px">7</div>
<div class="t " style="left:433.5px;top:476.53px;font-size:17.6px;color:#171b2e;font-weight:400;letter-spacing:0.3px;">External Communication</div>
<div style="position:absolute;left:868.5px;top:487.73px;width:17.6px;height:17.6px;border-radius:4px;background:#fde33a"></div>
<div class="t " style="left:898px;top:476.53px;font-size:17.6px;color:#171b2e;font-weight:400;letter-spacing:0.3px;">In Progress</div>
<div class="t" style="right:610.55px;top:476.53px;font-size:17.6px;color:#171b2e;font-weight:400;letter-spacing:0.95px;text-align:right;">22/03/2024</div>
<div class="t" style="right:449.05px;top:476.53px;font-size:17.6px;color:#c23b4b;font-weight:400;letter-spacing:0.95px;text-align:right;">03/04/2024</div>
<div class="t " style="left:1371px;top:476.53px;font-size:17.6px;color:#171b2e;font-weight:400;letter-spacing:0.3px;">1. Initiation, Ste...</div>
<div class="t " style="left:1536px;top:476.53px;font-size:17.6px;color:#171b2e;font-weight:400;letter-spacing:0.3px;">Julia Hernandez, ...</div>
<div class="t" style="left:326px;width:41px;text-align:center;top:516.15px;font-size:15.2px;color:#4d5774;letter-spacing:1.3px;text-indent:1.3px">8</div>
<div class="t " style="left:433.5px;top:516.95px;font-size:17.6px;color:#171b2e;font-weight:400;letter-spacing:0.3px;">Content Development</div>
<div style="position:absolute;left:868.5px;top:528.15px;width:17.6px;height:17.6px;border-radius:4px;background:#fde33a"></div>
<div class="t " style="left:898px;top:516.95px;font-size:17.6px;color:#171b2e;font-weight:400;letter-spacing:0.3px;">In Progress</div>
<div class="t" style="right:610.55px;top:516.95px;font-size:17.6px;color:#171b2e;font-weight:400;letter-spacing:0.95px;text-align:right;">22/03/2024</div>
<div class="t " style="left:1371px;top:516.95px;font-size:17.6px;color:#171b2e;font-weight:400;letter-spacing:0.3px;">Knowledge Bas...</div>
<div class="t" style="left:326px;width:41px;text-align:center;top:556.57px;font-size:15.2px;color:#4d5774;letter-spacing:1.3px;text-indent:1.3px">9</div>
<div class="t " style="left:433.5px;top:557.37px;font-size:17.6px;color:#171b2e;font-weight:400;letter-spacing:0.3px;">Communication</div>
<div style="position:absolute;left:868.5px;top:568.57px;width:17.6px;height:17.6px;border-radius:4px;background:#fde33a"></div>
<div class="t " style="left:898px;top:557.37px;font-size:17.6px;color:#171b2e;font-weight:400;letter-spacing:0.3px;">In Progress</div>
<div class="t" style="right:610.55px;top:557.37px;font-size:17.6px;color:#171b2e;font-weight:400;letter-spacing:0.95px;text-align:right;">18/04/2024</div>
<div class="t" style="right:449.05px;top:557.37px;font-size:17.6px;color:#c23b4b;font-weight:400;letter-spacing:0.95px;text-align:right;">09/05/2024</div>
<svg style="position:absolute;left:1371px;top:564.87px" width="24" height="24" viewBox="0 0 24 24"><defs><radialGradient id="sg" cx="0.5" cy="0.5" r="0.6"><stop offset="0" stop-color="#ffe835"/><stop offset="1" stop-color="#f2b93b"/></radialGradient></defs><path d="M15.1,2.8000000000000007 Q15.932,10.369 21.5,11.5 Q15.932,12.631 15.1,20.2 Q14.267999999999999,12.631 8.7,11.5 Q14.267999999999999,10.369 15.1,2.8000000000000007 Z" fill="url(#sg)"/><path d="M5.4,2.1000000000000005 Q5.738,5.667 8.0,6.2 Q5.738,6.7330000000000005 5.4,10.3 Q5.062,6.7330000000000005 2.8000000000000003,6.2 Q5.062,5.667 5.4,2.1000000000000005 Z" fill="url(#sg)"/><path d="M8.4,13.899999999999999 Q8.738,16.945 11.0,17.4 Q8.738,17.854999999999997 8.4,20.9 Q8.062000000000001,17.854999999999997 5.800000000000001,17.4 Q8.062000000000001,16.945 8.4,13.899999999999999 Z" fill="url(#sg)"/></svg>
<div class="t " style="left:1401px;top:557.37px;font-size:17.6px;color:#171b2e;font-weight:400;letter-spacing:0.3px;">Detailed ins...</div>
<div class="t " style="left:1536px;top:557.37px;font-size:17.6px;color:#171b2e;font-weight:400;letter-spacing:0.3px;">David Martin</div>
<div class="t" style="left:326px;width:41px;text-align:center;top:596.99px;font-size:15.2px;color:#4d5774;letter-spacing:1.3px;text-indent:1.3px">10</div>
<div class="t " style="left:433.5px;top:597.79px;font-size:17.6px;color:#171b2e;font-weight:400;letter-spacing:0.3px;">06. GA Launch</div>
<div style="position:absolute;left:868.5px;top:608.99px;width:17.6px;height:17.6px;border-radius:4px;background:#fde33a"></div>
<div class="t " style="left:898px;top:597.79px;font-size:17.6px;color:#171b2e;font-weight:400;letter-spacing:0.3px;">In Progress</div>
<div class="t" style="right:610.55px;top:597.79px;font-size:17.6px;color:#171b2e;font-weight:400;letter-spacing:0.95px;text-align:right;">08/02/2024</div>
<div class="t" style="right:449.05px;top:597.79px;font-size:17.6px;color:#c23b4b;font-weight:400;letter-spacing:0.95px;text-align:right;">08/02/2024</div>
<div class="t " style="left:1371px;top:597.79px;font-size:17.6px;color:#171b2e;font-weight:400;letter-spacing:0.3px;">Perform Custo...</div>
<div class="t " style="left:1536px;top:597.79px;font-size:17.6px;color:#171b2e;font-weight:400;letter-spacing:0.3px;">Lisa Simpson</div>
<div class="t" style="left:326px;width:41px;text-align:center;top:637.41px;font-size:15.2px;color:#4d5774;letter-spacing:1.3px;text-indent:1.3px">11</div>
<div class="t " style="left:433.5px;top:638.21px;font-size:17.6px;color:#171b2e;font-weight:400;letter-spacing:0.3px;">TEST 2</div>
<div style="position:absolute;left:868.5px;top:649.41px;width:17.6px;height:17.6px;border-radius:4px;background:#14bcd6"></div>
<div class="t " style="left:898px;top:638.21px;font-size:17.6px;color:#171b2e;font-weight:400;letter-spacing:0.3px;">New</div>
<div class="t" style="right:610.55px;top:638.21px;font-size:17.6px;color:#171b2e;font-weight:400;letter-spacing:0.95px;text-align:right;">06/05/2024</div>
<div class="t" style="right:449.05px;top:638.21px;font-size:17.6px;color:#c23b4b;font-weight:400;letter-spacing:0.95px;text-align:right;">23/05/2024</div>
<div class="t " style="left:1371px;top:638.21px;font-size:17.6px;color:#171b2e;font-weight:400;letter-spacing:0.3px;">Website Launch</div>
<div class="t" style="left:326px;width:41px;text-align:center;top:677.83px;font-size:15.2px;color:#4d5774;letter-spacing:1.3px;text-indent:1.3px">12</div>
<div class="t " style="left:433.5px;top:678.63px;font-size:17.6px;color:#171b2e;font-weight:400;letter-spacing:0.3px;">TEST 1</div>
<div style="position:absolute;left:868.5px;top:689.83px;width:17.6px;height:17.6px;border-radius:4px;background:#14bcd6"></div>
<div class="t " style="left:898px;top:678.63px;font-size:17.6px;color:#171b2e;font-weight:400;letter-spacing:0.3px;">New</div>
<div class="t" style="right:610.55px;top:678.63px;font-size:17.6px;color:#171b2e;font-weight:400;letter-spacing:0.95px;text-align:right;">06/05/2024</div>
<div class="t" style="right:449.05px;top:678.63px;font-size:17.6px;color:#c23b4b;font-weight:400;letter-spacing:0.95px;text-align:right;">17/05/2024</div>
<div class="t " style="left:1371px;top:678.63px;font-size:17.6px;color:#171b2e;font-weight:400;letter-spacing:0.3px;">Website Launch</div>
<div class="t" style="left:326px;width:41px;text-align:center;top:718.25px;font-size:15.2px;color:#4d5774;letter-spacing:1.3px;text-indent:1.3px">13</div>
<div class="t " style="left:433.5px;top:719.05px;font-size:17.6px;color:#171b2e;font-weight:400;letter-spacing:0.3px;">External Communication</div>
<div style="position:absolute;left:868.5px;top:730.25px;width:17.6px;height:17.6px;border-radius:4px;background:#14bcd6"></div>
<div class="t " style="left:898px;top:719.05px;font-size:17.6px;color:#171b2e;font-weight:400;letter-spacing:0.3px;">New</div>
<div class="t" style="right:610.55px;top:719.05px;font-size:17.6px;color:#171b2e;font-weight:400;letter-spacing:0.95px;text-align:right;">22/03/2024</div>
<div class="t" style="right:449.05px;top:719.05px;font-size:17.6px;color:#c23b4b;font-weight:400;letter-spacing:0.95px;text-align:right;">08/04/2024</div>
<div class="t " style="left:1371px;top:719.05px;font-size:17.6px;color:#171b2e;font-weight:400;letter-spacing:0.3px;">Website Launch...</div>
<div class="t" style="left:326px;width:41px;text-align:center;top:758.67px;font-size:15.2px;color:#4d5774;letter-spacing:1.3px;text-indent:1.3px">14</div>
<div class="t " style="left:433.5px;top:759.47px;font-size:17.6px;color:#171b2e;font-weight:400;letter-spacing:0.3px;">03. External Research</div>
<div style="position:absolute;left:868.5px;top:770.67px;width:17.6px;height:17.6px;border-radius:4px;background:#14bcd6"></div>
<div class="t " style="left:898px;top:759.47px;font-size:17.6px;color:#171b2e;font-weight:400;letter-spacing:0.3px;">New</div>
<div class="t" style="right:610.55px;top:759.47px;font-size:17.6px;color:#171b2e;font-weight:400;letter-spacing:0.95px;text-align:right;">08/02/2024</div>
<div class="t " style="left:1371px;top:759.47px;font-size:17.6px;color:#171b2e;font-weight:400;letter-spacing:0.3px;">Website Launch...</div>
<div class="t " style="left:1536px;top:759.47px;font-size:17.6px;color:#171b2e;font-weight:400;letter-spacing:0.3px;">David Martin</div>
<div class="t" style="left:326px;width:41px;text-align:center;top:799.09px;font-size:15.2px;color:#4d5774;letter-spacing:1.3px;text-indent:1.3px">15</div>
<div class="t " style="left:433.5px;top:799.89px;font-size:17.6px;color:#171b2e;font-weight:400;letter-spacing:0.3px;">Review with Digital Team</div>
<div style="position:absolute;left:868.5px;top:811.09px;width:17.6px;height:17.6px;border-radius:4px;background:#9b2cb4"></div>
<div class="t " style="left:898px;top:799.89px;font-size:17.6px;color:#171b2e;font-weight:400;letter-spacing:0.3px;">In Progress</div>
<div class="t" style="right:610.55px;top:799.89px;font-size:17.6px;color:#171b2e;font-weight:400;letter-spacing:0.95px;text-align:right;">04/03/2024</div>
<div class="t " style="left:1371px;top:799.89px;font-size:17.6px;color:#171b2e;font-weight:400;letter-spacing:0.3px;">Step 1: Quick S...</div>
<div class="t" style="left:326px;width:41px;text-align:center;top:839.51px;font-size:15.2px;color:#4d5774;letter-spacing:1.3px;text-indent:1.3px">16</div>
<div class="t " style="left:433.5px;top:840.31px;font-size:17.6px;color:#171b2e;font-weight:400;letter-spacing:0.3px;">Weekly Meeting Template</div>
<div style="position:absolute;left:868.5px;top:851.51px;width:17.6px;height:17.6px;border-radius:4px;background:#0d8f7e"></div>
<div class="t " style="left:898px;top:840.31px;font-size:17.6px;color:#171b2e;font-weight:400;letter-spacing:0.3px;">Scheduled</div>
<div class="t" style="right:610.55px;top:840.31px;font-size:17.6px;color:#171b2e;font-weight:400;letter-spacing:0.95px;text-align:right;">27/05/2024</div>
<div class="t " style="left:1371px;top:840.31px;font-size:17.6px;color:#171b2e;font-weight:400;letter-spacing:0.3px;">Templates</div>
<div class="t " style="left:1536px;top:840.31px;font-size:17.6px;color:#171b2e;font-weight:400;letter-spacing:0.3px;">Amy White, Julia ...</div>
<div class="t" style="left:326px;width:41px;text-align:center;top:879.93px;font-size:15.2px;color:#4d5774;letter-spacing:1.3px;text-indent:1.3px">17</div>
<div class="t " style="left:433.5px;top:880.73px;font-size:17.6px;color:#171b2e;font-weight:400;letter-spacing:0.3px;">Workspace Configuration 3</div>
<div style="position:absolute;left:868.5px;top:891.93px;width:17.6px;height:17.6px;border-radius:4px;background:#fd9a0e"></div>
<div class="t " style="left:898px;top:880.73px;font-size:17.6px;color:#171b2e;font-weight:400;letter-spacing:0.3px;">To Be Schedu...</div>
<div class="t" style="right:610.55px;top:880.73px;font-size:17.6px;color:#171b2e;font-weight:400;letter-spacing:0.95px;text-align:right;">04/01/2024</div>
<div class="t" style="right:449.05px;top:880.73px;font-size:17.6px;color:#c23b4b;font-weight:400;letter-spacing:0.95px;text-align:right;">22/03/2024</div>
<div class="t " style="left:1371px;top:880.73px;font-size:17.6px;color:#171b2e;font-weight:400;letter-spacing:0.3px;">Enterprise D De...</div>
<div class="t" style="left:326px;width:41px;text-align:center;top:920.35px;font-size:15.2px;color:#4d5774;letter-spacing:1.3px;text-indent:1.3px">18</div>
<div class="t " style="left:433.5px;top:921.15px;font-size:17.6px;color:#171b2e;font-weight:400;letter-spacing:0.3px;">Workspace Configuration 3</div>
<div style="position:absolute;left:868.5px;top:932.35px;width:17.6px;height:17.6px;border-radius:4px;background:#fd9a0e"></div>
<div class="t " style="left:898px;top:921.15px;font-size:17.6px;color:#171b2e;font-weight:400;letter-spacing:0.3px;">To Be Schedu...</div>
<div class="t" style="right:610.55px;top:921.15px;font-size:17.6px;color:#171b2e;font-weight:400;letter-spacing:0.95px;text-align:right;">04/01/2024</div>
<div class="t" style="right:449.05px;top:921.15px;font-size:17.6px;color:#c23b4b;font-weight:400;letter-spacing:0.95px;text-align:right;">22/03/2024</div>
<div class="t " style="left:1371px;top:921.15px;font-size:17.6px;color:#171b2e;font-weight:400;letter-spacing:0.3px;">Pinnacle D Depl...</div>
<div class="t" style="left:326px;width:41px;text-align:center;top:960.77px;font-size:15.2px;color:#4d5774;letter-spacing:1.3px;text-indent:1.3px">19</div>
<div class="t " style="left:433.5px;top:961.57px;font-size:17.6px;color:#171b2e;font-weight:400;letter-spacing:0.3px;">Workspace Configuration 2</div>
<div style="position:absolute;left:868.5px;top:972.77px;width:17.6px;height:17.6px;border-radius:4px;background:#fd9a0e"></div>
<div class="t " style="left:898px;top:961.57px;font-size:17.6px;color:#171b2e;font-weight:400;letter-spacing:0.3px;">To Be Schedu...</div>
<div class="t" style="right:610.55px;top:961.57px;font-size:17.6px;color:#171b2e;font-weight:400;letter-spacing:0.95px;text-align:right;">04/01/2024</div>
<div class="t" style="right:449.05px;top:961.57px;font-size:17.6px;color:#c23b4b;font-weight:400;letter-spacing:0.95px;text-align:right;">20/03/2024</div>
<div class="t " style="left:1371px;top:961.57px;font-size:17.6px;color:#171b2e;font-weight:400;letter-spacing:0.3px;">Enterprise D De...</div>
</div>
<div style="position:absolute;left:322px;top:982.5px;width:1478px;height:42.5px;background:linear-gradient(#ffffff 0%,#f8f8fa 40%,#ebebee 100%)"></div>
<div style="position:absolute;left:322px;top:982px;width:1478px;height:1px;background:#e4e7ee;"></div>
<div style="position:absolute;left:371px;top:982px;width:1px;height:43px;background:#e4e7ee;"></div>
<div style="position:absolute;left:856px;top:982px;width:1px;height:43px;background:#e4e7ee;"></div>
<div style="position:absolute;left:1035px;top:982px;width:1px;height:43px;background:#e4e7ee;"></div>
<div style="position:absolute;left:1198px;top:982px;width:1px;height:43px;background:#e4e7ee;"></div>
<div style="position:absolute;left:1360px;top:982px;width:1px;height:43px;background:#e4e7ee;"></div>
<div style="position:absolute;left:1525px;top:982px;width:1px;height:43px;background:#e4e7ee;"></div>
<div style="position:absolute;left:1702px;top:982px;width:1px;height:43px;background:#e4e7ee;"></div>
<div class="t " style="left:383px;top:984.00px;font-size:17.6px;color:#171b2e;font-weight:400;letter-spacing:0.3px;">Total: 566 tasks</div>
<div class="t " style="left:1210px;top:984.80px;font-size:12.3px;color:#171b2e;font-weight:700;letter-spacing:0.7px;-webkit-text-stroke:0;">MAX</div>
<div class="t" style="right:449.05px;top:984.00px;font-size:17.6px;color:#171b2e;font-weight:400;letter-spacing:0.95px;text-align:right;">14/10/2024</div>
<div class="t " style="left:1713px;top:984.80px;font-size:12.3px;color:#171b2e;font-weight:700;letter-spacing:0.7px;-webkit-text-stroke:0;">SUM</div>
<div class="t " style="left:1776px;top:984.00px;font-size:17.6px;color:#171b2e;font-weight:400;letter-spacing:0.95px;">265</div>
<div style="position:absolute;left:0px;top:0px;width:1800px;height:1px;background:#1e1e1e;"></div>
<div style="position:absolute;left:0px;top:1023px;width:1800px;height:2px;background:#1a1a1a;"></div>
<svg style="position:absolute;left:0;top:1011px" width="13" height="14" viewBox="0 0 13 14"><path d="M0,0 L0,14 L13,14 L13,12 L10,12 Q0,12 0,2 Z" fill="#262626"/></svg>
<svg style="position:absolute;left:1787px;top:1011px" width="13" height="14" viewBox="0 0 13 14"><path d="M13,0 L13,14 L0,14 L0,12 L3,12 Q13,12 13,2 Z" fill="#262626"/></svg>
</div></body></html>
